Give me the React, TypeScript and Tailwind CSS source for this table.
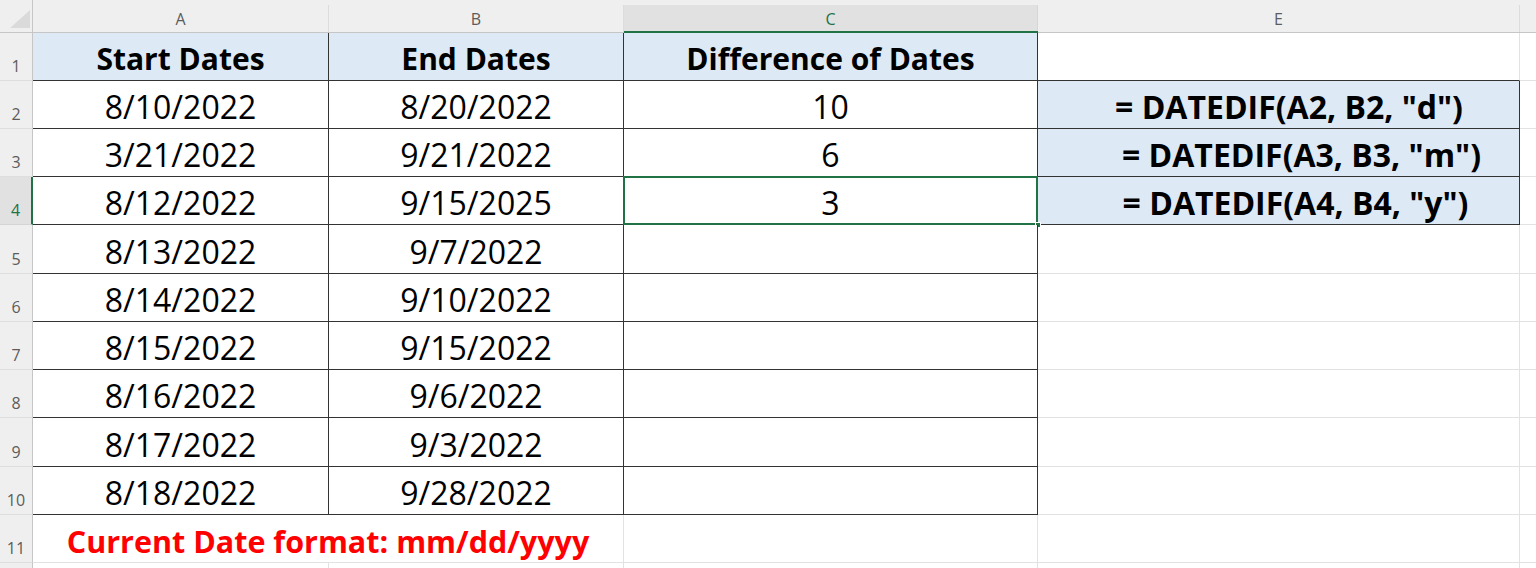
import React from "react";

type RowData = {
  a?: string;
  b?: string;
  c?: string;
  e?: string;
};

const rows: RowData[] = [
  { a: "Start Dates", b: "End Dates", c: "Difference of Dates" },
  { a: "8/10/2022", b: "8/20/2022", c: "10", e: '= DATEDIF(A2, B2, "d")' },
  { a: "3/21/2022", b: "9/21/2022", c: "6", e: '= DATEDIF(A3, B3, "m")' },
  { a: "8/12/2022", b: "9/15/2025", c: "3", e: '= DATEDIF(A4, B4, "y")' },
  { a: "8/13/2022", b: "9/7/2022" },
  { a: "8/14/2022", b: "9/10/2022" },
  { a: "8/15/2022", b: "9/15/2022" },
  { a: "8/16/2022", b: "9/6/2022" },
  { a: "8/17/2022", b: "9/3/2022" },
  { a: "8/18/2022", b: "9/28/2022" },
];

const formulaPad = ["pl-[21px]", "pl-[46px]", "pl-[34px]"];

function ColHead({ label, active }: { label: string; active?: boolean }) {
  return (
    <div
      className={
        active
          ? "bg-[#efefef] pt-[5px] border-b-2 border-b-[#217346]"
          : "bg-[#efefef] pt-[5px] border-b border-b-[#c6c6c6]"
      }
    >
      <div
        className={
          active
            ? "h-full flex items-center justify-center pt-px border-r border-r-[#d6d6d6] bg-[#e1e1e1] text-[#217346] text-[16px]"
            : "h-full flex items-center justify-center pt-px border-r border-r-[#dcdcdc] text-[#5c5c5c] text-[16px]"
        }
      >
        {label}
      </div>
    </div>
  );
}

function RowHead({ n, active }: { n: number; active?: boolean }) {
  return (
    <div
      className={
        active
          ? "flex items-end justify-center pb-[2px] bg-[#e1e1e1] border-r-2 border-r-[#217346] border-b border-b-[#d4d4d4] text-[16px] text-[#217346]"
          : "flex items-end justify-center pb-[2px] bg-[#efefef] border-r border-r-[#c6c6c6] border-b border-b-[#dedede] text-[16px] text-[#5c5c5c]"
      }
    >
      {n}
    </div>
  );
}

export default function App() {
  return (
    <div className="h-[568px] w-[1536px] overflow-hidden bg-white font-['Open_Sans',sans-serif]">
      <div className="grid grid-cols-[33px_296px_295px_414px_482px_1fr] grid-rows-[33px_48px_48px_48px_48px_49px_48px_48px_48px_49px_48px_48px_48px]">
        {/* corner */}
        <div className="relative bg-[#efefef] border-r border-b border-[#c6c6c6]">
          <svg className="absolute inset-0" width="33" height="33" viewBox="0 0 33 33">
            <polygon points="10,28 30,10 30,28" fill="#dadada" />
          </svg>
        </div>
        <ColHead label="A" />
        <ColHead label="B" />
        <ColHead label="C" active />
        <ColHead label="E" />
        <div className="bg-[#efefef] border-b border-b-[#c6c6c6]" />

        {rows.map((row, i) => {
          const header = i === 0;
          const inBox = i >= 1 && i <= 3;
          const cellBase = header
            ? "flex items-end justify-center pb-[6px] border-r border-b border-r-[#333333] border-b-[#333333] bg-[#dde9f5] text-[30px] leading-none font-bold text-black"
            : "flex items-end justify-center pb-[5px] border-r border-b border-r-[#333333] border-b-[#333333] bg-white text-[32px] leading-none text-black";
          return (
            <React.Fragment key={i}>
              <RowHead n={i + 1} active={i === 3} />
              <div className={cellBase}>{row.a}</div>
              <div className={cellBase}>{row.b}</div>
              <div className={`relative ${cellBase}`}>
                {row.c}
                {i === 3 && (
                  <>
                    <div className="pointer-events-none absolute -left-px -top-px right-[-1px] bottom-[-1px] border-2 border-[#217346]" />
                    <div className="pointer-events-none absolute right-[-4px] bottom-[-4px] h-[6px] w-[6px] bg-[#217346] border border-white" />
                  </>
                )}
              </div>
              {inBox ? (
                <div
                  className={`flex items-end justify-center pb-[5px] border-r border-b border-r-[#333333] border-b-[#333333] bg-[#dde9f5] text-[32px] leading-none font-bold text-black whitespace-pre ${formulaPad[i - 1]}`}
                >
                  {row.e}
                </div>
              ) : (
                <div
                  className={
                    header
                      ? "border-r border-b border-r-[#e2e2e2] border-b-[#333333]"
                      : "border-r border-b border-r-[#e2e2e2] border-b-[#e2e2e2]"
                  }
                />
              )}
              <div className="border-b border-b-[#e2e2e2]" />
            </React.Fragment>
          );
        })}

        {/* row 11 */}
        <RowHead n={11} />
        <div className="col-span-2 flex items-end justify-center pb-[6px] border-r border-b border-r-[#e2e2e2] border-b-[#e2e2e2] text-[30.5px] leading-none font-bold text-[#ff0000]">
          Current Date format: mm/dd/yyyy
        </div>
        <div className="border-r border-b border-r-[#e2e2e2] border-b-[#e2e2e2]" />
        <div className="border-r border-b border-r-[#e2e2e2] border-b-[#e2e2e2]" />
        <div className="border-b border-b-[#e2e2e2]" />

        {/* row 12, cut off */}
        <div className="bg-[#efefef] border-r border-r-[#c6c6c6]" />
        <div className="border-r border-r-[#e2e2e2]" />
        <div className="border-r border-r-[#e2e2e2]" />
        <div className="border-r border-r-[#e2e2e2]" />
        <div className="border-r border-r-[#e2e2e2]" />
        <div />
      </div>
    </div>
  );
}
